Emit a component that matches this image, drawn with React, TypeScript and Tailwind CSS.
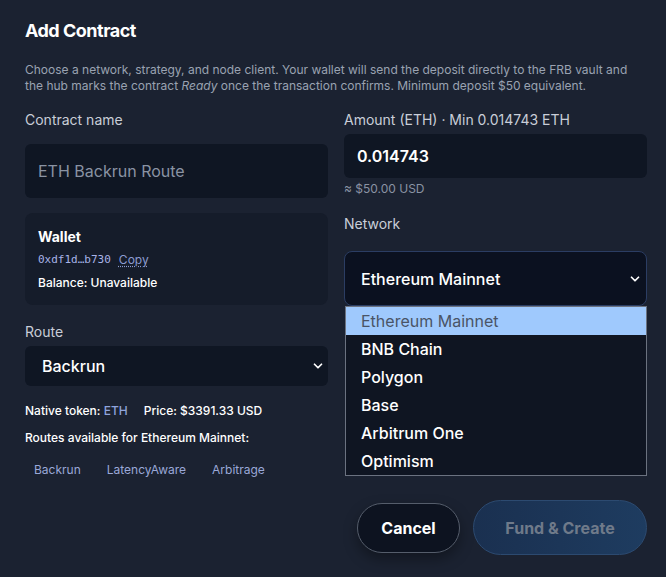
import { ChevronDown } from "lucide-react";

const networks = ["Ethereum Mainnet", "BNB Chain", "Polygon", "Base", "Arbitrum One", "Optimism"];
const routes = ["Backrun", "LatencyAware", "Arbitrage"];

export default function App() {
  return (
    <div className="min-h-[577px] w-[666px] bg-[#1b2231] pl-[25px] pr-[19px] pt-[17px] font-['Inter','Liberation_Sans',sans-serif] text-white">
      <h1 className="text-[18px] font-bold leading-[28px] tracking-[-0.5px]">Add Contract</h1>
      <p className="mt-[17px] text-[12px] leading-[16px] text-[#9aa2b1]">
        Choose a network, strategy, and node client. Your wallet will send the deposit directly to the FRB vault and
        the hub marks the contract <em>Ready</em> once the transaction confirms. Minimum deposit $50 equivalent.
      </p>

      <div className="mt-[16px] grid grid-cols-2 gap-4">
        {/* left column */}
        <div className="flex flex-col">
          <label className="text-[14px] leading-[20px] text-[#c9ced8]">Contract name</label>
          <div className="mt-[14px] flex h-[54px] items-center rounded-md bg-[#0f1623] px-[13px] text-[16px] text-[#8a93a3]">
            ETH Backrun Route
          </div>

          <div className="mt-[15px] rounded-lg bg-[#151c2a] px-[13px] py-[14px]">
            <div className="text-[14px] font-bold leading-[20px]">Wallet</div>
            <div className="mt-[5px] flex items-center gap-[8px] text-[12px] leading-[16px]">
              <span className="font-['DejaVu_Sans_Mono',monospace] text-[11px] text-[#a8b4e8]">0xdf1d…b730</span>
              <span className="text-[#8c9bd0] underline decoration-dotted underline-offset-2">Copy</span>
            </div>
            <div className="mt-[7px] text-[12px] font-medium leading-[16px]">Balance: Unavailable</div>
          </div>

          <label className="mt-[17px] text-[14px] leading-[20px] text-[#c9ced8]">Route</label>
          <div className="mt-[4px] flex h-[40px] items-center justify-between rounded-md bg-[#0f1623] pl-[17px] pr-[3px] text-[16px] font-medium">
            <span>Backrun</span>
            <ChevronDown className="h-[14px] w-[14px]" strokeWidth={3} />
          </div>

          <div className="mt-[17px] flex gap-4 text-[12px] font-medium leading-[16px]">
            <span>
              Native token: <span className="text-[#8fa4dc]">ETH</span>
            </span>
            <span>Price: $3391.33 USD</span>
          </div>
          <div className="mt-[11px] text-[12px] font-medium leading-[16px]">Routes available for Ethereum Mainnet:</div>
          <div className="mt-[12px] flex gap-2">
            {routes.map((r) => (
              <span key={r} className="rounded-full px-[9px] py-[4px] text-[12px] leading-[16px] text-[#9aa8d8]">
                {r}
              </span>
            ))}
          </div>
        </div>

        {/* right column */}
        <div className="flex flex-col">
          <label className="text-[14px] leading-[20px] text-[#c9ced8]">Amount (ETH) · Min 0.014743 ETH</label>
          <div className="mt-[4px] flex h-[44px] items-center rounded-md bg-[#0f1623] px-[13px] text-[16px] font-semibold">
            0.014743
          </div>
          <div className="mt-[4px] text-[12px] leading-[14px] text-[#8a93a3]">≈ $50.00 USD</div>

          <label className="mt-[18px] text-[14px] leading-[20px] text-[#c9ced8]">Network</label>
          <div className="relative mt-[17px]">
            <div className="flex h-[55px] items-center justify-between rounded-lg border border-[#2b3d63] bg-[#0b1120] pl-[16px] pr-[4px] text-[16px] font-medium">
              <span>Ethereum Mainnet</span>
              <ChevronDown className="h-[14px] w-[14px]" strokeWidth={3} />
            </div>
            <ul className="absolute left-[1px] right-0 top-[55px] z-10 border border-[#6b7280] bg-[#0f1522]">
              {networks.map((n, i) => (
                <li
                  key={n}
                  className={
                    i === 0
                      ? "flex h-[28px] items-center bg-[#9fc9fd] pl-[15px] text-[16px] text-[#4a5466]"
                      : "flex h-[28px] items-center pl-[15px] text-[16px] font-medium text-white"
                  }
                >
                  {n}
                </li>
              ))}
            </ul>
          </div>
        </div>
      </div>

      <div className="mt-[18px] flex items-center justify-end gap-[13px]">
        <button className="h-[50px] w-[103px] rounded-full border border-[#555d6b] bg-[#0d1320] text-[16px] font-bold text-white shadow-[0_6px_14px_rgba(0,0,0,0.35)]">
          Cancel
        </button>
        <button className="h-[55px] w-[174px] rounded-full border border-[#2c4a70] bg-gradient-to-r from-[#1a3050] to-[#1e3c60] text-[16px] font-bold text-[#6f7a8a]">
          Fund &amp; Create
        </button>
      </div>
    </div>
  );
}
